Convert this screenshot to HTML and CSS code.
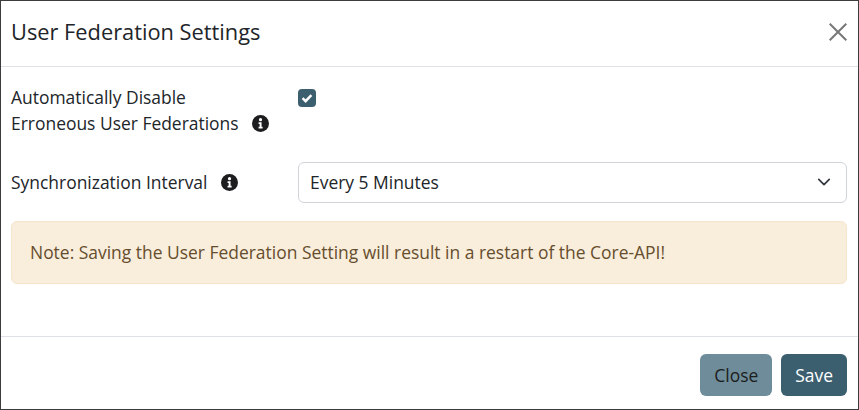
FILE: index.html
```html
<!DOCTYPE html>
<html lang="en">
<head>
  <meta charset="UTF-8" />
  <title>User Federation Settings</title>
  <link rel="stylesheet" href="styles.css">
</head>
<body>
  <div class="modal">
    <header class="modal-header">
      <h2>User Federation Settings</h2>
      <button class="close-x" aria-label="Close">
        <svg width="18" height="18" viewBox="0 0 18 18"><path d="M0.7 0.7 L17.3 17.3 M17.3 0.7 L0.7 17.3" fill="none" stroke="#777" stroke-width="2"/></svg>
      </button>
    </header>

    <div class="modal-body">
      <div class="row row-check">
        <div class="label">
          <span>Automatically Disable<br>Erroneous User Federations</span>
          <svg class="info info-wrap" width="17" height="17" viewBox="0 0 16 16"><use href="#info"/></svg>
        </div>
        <div class="field">
          <span class="checkbox">
            <svg width="12" height="12" viewBox="0 0 12 12"><path d="M1.6 6.2 L4.6 9.2 L10.4 3.2" fill="none" stroke="#fff" stroke-width="2.4"/></svg>
          </span>
        </div>
      </div>

      <div class="row row-select">
        <div class="label label-center">
          <span>Synchronization Interval</span>
          <svg class="info" width="17" height="17" viewBox="0 0 16 16"><use href="#info"/></svg>
        </div>
        <div class="field">
          <div class="select">
            <span>Every 5 Minutes</span>
            <svg width="14" height="14" viewBox="0 0 16 16"><path d="M2 5 L8 11 L14 5" fill="none" stroke="#343a40" stroke-width="2" stroke-linecap="round" stroke-linejoin="round"/></svg>
          </div>
        </div>
      </div>

      <div class="note">Note: Saving the User Federation Setting will result in a restart of the Core-API!</div>
    </div>

    <footer class="modal-footer">
      <button class="btn btn-close">Close</button>
      <button class="btn btn-save">Save</button>
    </footer>
  </div>

  <svg width="0" height="0" class="defs">
    <symbol id="info" viewBox="0 0 16 16">
      <circle cx="8" cy="8" r="8" fill="#1d1d1f"/>
      <circle cx="8" cy="4.4" r="1.5" fill="#fff"/>
      <path d="M6.2 6.8 H9 V11 H10 V12.6 H6.2 V11 H7.2 V8.4 H6.2 Z" fill="#fff"/>
    </symbol>
  </svg>
</body>
</html>
```

FILE: styles.css
```css
* {
  box-sizing: border-box;
}
html, body {
  margin: 0;
  height: 410px;
  overflow: hidden;
}
body {
  font-family: "Open Sans", sans-serif;
  font-size: 17.44px;
  line-height: 26.25px;
  color: #212529;
  background: #fff;
}
.defs {
  display: block;
}
.modal {
  display: flex;
  flex-direction: column;
  height: 410px;
  border: 1px solid #3c3c3c;
  background: #fff;
}
.modal-header {
  display: flex;
  justify-content: space-between;
  align-items: center;
  height: 66px;
  padding: 0 11px 3px 10px;
  border-bottom: 1px solid #dee2e6;
  flex-shrink: 0;
}
.modal-header h2 {
  margin: 0;
  font-size: 21.8px;
  font-weight: 400;
  line-height: 32px;
}
.close-x {
  display: flex;
  padding: 0;
  border: none;
  background: none;
}
.modal-body {
  flex: 1;
  padding: 17px 11px 0 10px;
}
.row {
  display: flex;
}
.row-select {
  margin-top: 25px;
}
.label {
  display: flex;
  width: 287px;
  flex-shrink: 0;
  align-items: flex-end;
  gap: 14px;
}
.label-center {
  align-items: center;
}
.info {
  flex-shrink: 0;
}
.info-wrap {
  margin: 0 0 5px -1px;
}
.field {
  flex: 1;
}
.checkbox {
  display: flex;
  align-items: center;
  justify-content: center;
  width: 18px;
  height: 18px;
  margin-top: 5px;
  border-radius: 4px;
  background: #3c5f70;
}
.select {
  display: flex;
  justify-content: space-between;
  align-items: center;
  height: 41px;
  padding: 0 15px 0 11px;
  border: 1px solid #ced4da;
  border-radius: 6px;
}
.note {
  margin-top: 18px;
  height: 63px;
  padding: 17px 18px;
  border: 1px solid #f6e5cd;
  border-radius: 6px;
  background: #f9eddc;
  color: #664d2d;
}
.modal-footer {
  display: flex;
  justify-content: flex-end;
  gap: 9px;
  height: 73px;
  padding: 17px 11px 0 0;
  border-top: 1px solid #dee2e6;
  flex-shrink: 0;
}
.btn {
  height: 42px;
  padding: 0 14px;
  border: none;
  border-radius: 6px;
  font: inherit;
}
.btn-close {
  background: #6f8c9b;
  color: #1c1c1c;
}
.btn-save {
  background: #3c5f70;
  color: #fff;
}
```
